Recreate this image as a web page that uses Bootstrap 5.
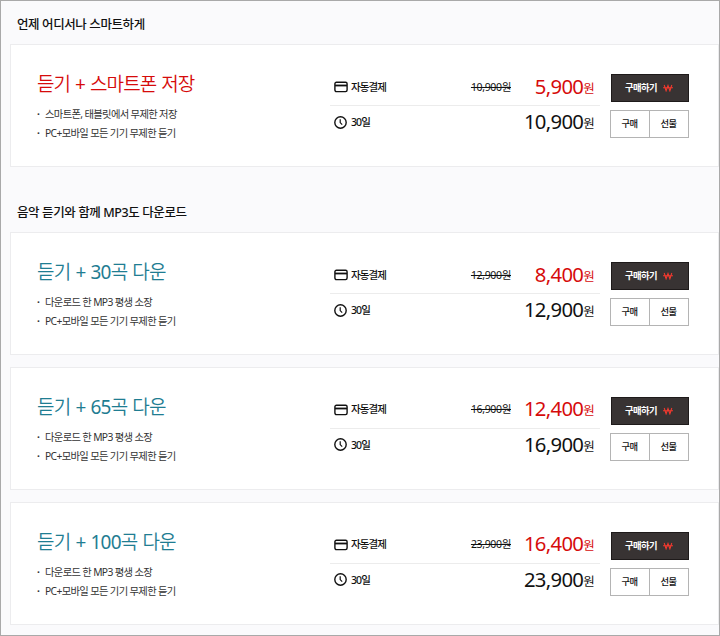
<!DOCTYPE html>
<html lang="ko">
<head>
    <meta charset="UTF-8">
    <meta name="viewport" content="width=device-width, initial-scale=1.0">
    <title>이용권 구매</title>
    <link href="https://cdn.jsdelivr.net/npm/bootstrap@5.3.0/dist/css/bootstrap.min.css" rel="stylesheet">
    <script src="https://cdn.jsdelivr.net/npm/bootstrap@5.3.0/dist/js/bootstrap.bundle.min.js"></script>
    <style>
        body {
            font-family: "Noto Sans", "Noto Sans CJK KR", sans-serif;
            background-color: #fafafc;
            color: #111;
        }
        .shop {
            width: 720px;
            height: 636px;
            border: 1px solid #a9a9a9;
            padding-left: 9px;
        }
        .shop h2 {
            height: 43px;
            line-height: 48px;
            margin: 0;
            padding-left: 7px;
            font-size: 12.5px;
            font-weight: 500;
            letter-spacing: -0.4px;
        }
        .shop h2.next {
            margin-top: 22px;
        }
        .plan {
            height: 123px;
            border: 1px solid #ececee;
            border-radius: 0;
            background-color: #fff;
        }
        .plan + .plan {
            margin-top: 11.8px;
        }
        .plan-info {
            width: 319px;
            padding: 24px 0 0 26px;
        }
        .plan-info h3 {
            margin: 0 0 6px;
            font-family: "Noto Sans", "Noto Sans CJK KR DemiLight", "Noto Sans CJK KR", sans-serif;
            font-size: 19px;
            line-height: 30px;
            font-weight: 400;
            letter-spacing: -0.8px;
            word-spacing: 0.9px;
            color: #1f7d92;
        }
        .plan-info h3.hot {
            color: #d60b0b;
            letter-spacing: -0.9px;
        }
        .plan-info li {
            font-size: 10.3px;
            line-height: 19.4px;
            letter-spacing: -0.65px;
            color: #333;
        }
        .plan-info li::before {
            content: "·";
            display: inline-block;
            width: 8px;
            font-weight: 700;
        }
        .plan-price {
            width: 270px;
            padding-top: 25px;
        }
        .price-line {
            height: 35px;
            padding: 0 6px 0 3px;
        }
        .price-line + .price-line {
            border-top: 1px solid #ececec;
        }
        .price-line svg {
            margin: 0 3px 1px 1px;
        }
        .price-name {
            font-size: 10.5px;
            letter-spacing: -0.9px;
            font-weight: 500;
        }
        .price-line del {
            font-size: 10.5px;
            letter-spacing: -0.35px;
        }
        .amount {
            width: 83px;
            margin-bottom: 4px;
            font-size: 20.3px;
            line-height: 34px;
            letter-spacing: -0.7px;
        }
        .amount span {
            font-size: 12.5px;
            line-height: 1;
            vertical-align: 1.5px;
        }
        .amount.sale {
            color: #d60b0b;
        }
        .plan-btns {
            width: 79px;
            margin-left: 10px;
            padding-top: 29px;
        }
        .plan-btns .btn {
            border-radius: 0;
            padding: 0 1px 0 0;
            height: 28px;
            font-size: 9.3px;
            line-height: 26px;
            letter-spacing: -0.6px;
            font-weight: 500;
            border: 1px solid #b4b4b4;
            color: #111;
            background-color: #fff;
        }
        .plan-btns .btn-buy {
            width: 78px;
            height: 28px;
            padding-right: 2px;
            margin-left: 1px;
            border-color: #1e1a1a;
            background-color: #383333;
            color: #fff;
            font-weight: 700;
        }
        .btn-buy svg {
            margin-left: 6px;
        }
    </style>
</head>
<body>
    <svg class="d-none">
        <symbol id="ico-card" viewBox="0 0 14 12">
            <rect x=".9" y="1.2" width="12.2" height="9.4" rx="1.5" fill="none" stroke="#111" stroke-width="1.4"/>
            <path d="M1 4.5h12" stroke="#111" stroke-width="1.8"/>
        </symbol>
        <symbol id="ico-clock" viewBox="0 0 14 14">
            <circle cx="6.5" cy="6.5" r="5.7" fill="none" stroke="#111" stroke-width="1.4"/>
            <path d="M6.2 3.3V6.6l2 2" fill="none" stroke="#111" stroke-width="1.2"/>
        </symbol>
        <symbol id="ico-won" viewBox="0 0 10 8">
            <path d="M1.2 1l1.9 5.8L5 1.5l1.9 5.3L8.8 1M0 3.8h10" fill="none" stroke="#f0392e" stroke-width="1.1"/>
        </symbol>
    </svg>

    <main class="shop overflow-hidden">
        <h2>언제 어디서나 스마트하게</h2>
        <div class="plan card flex-row">
            <div class="plan-info">
                <h3 class="hot">듣기 + 스마트폰 저장</h3>
                <ul class="list-unstyled mb-0">
                    <li>스마트폰, 태블릿에서 무제한 저장</li>
                    <li>PC+모바일 모든 기기 무제한 듣기</li>
                </ul>
            </div>
            <div class="plan-price">
                <div class="price-line d-flex align-items-center">
                    <svg width="14" height="12"><use href="#ico-card"/></svg>
                    <span class="price-name me-auto">자동결제</span>
                    <del>10,900원</del>
                    <div class="amount sale text-end">5,900<span>원</span></div>
                </div>
                <div class="price-line d-flex align-items-center">
                    <svg width="14" height="14"><use href="#ico-clock"/></svg>
                    <span class="price-name me-auto">30일</span>
                    <div class="amount text-end">10,900<span>원</span></div>
                </div>
            </div>
            <div class="plan-btns">
                <button class="btn btn-buy d-flex align-items-center justify-content-center">구매하기<svg width="10" height="8"><use href="#ico-won"/></svg></button>
                <div class="btn-group w-100 mt-2">
                    <button class="btn">구매</button>
                    <button class="btn">선물</button>
                </div>
            </div>
        </div>

        <h2 class="next">음악 듣기와 함께 MP3도 다운로드</h2>
        <div class="plan card flex-row">
            <div class="plan-info">
                <h3>듣기 + 30곡 다운</h3>
                <ul class="list-unstyled mb-0">
                    <li>다운로드 한 MP3 평생 소장</li>
                    <li>PC+모바일 모든 기기 무제한 듣기</li>
                </ul>
            </div>
            <div class="plan-price">
                <div class="price-line d-flex align-items-center">
                    <svg width="14" height="12"><use href="#ico-card"/></svg>
                    <span class="price-name me-auto">자동결제</span>
                    <del>12,900원</del>
                    <div class="amount sale text-end">8,400<span>원</span></div>
                </div>
                <div class="price-line d-flex align-items-center">
                    <svg width="14" height="14"><use href="#ico-clock"/></svg>
                    <span class="price-name me-auto">30일</span>
                    <div class="amount text-end">12,900<span>원</span></div>
                </div>
            </div>
            <div class="plan-btns">
                <button class="btn btn-buy d-flex align-items-center justify-content-center">구매하기<svg width="10" height="8"><use href="#ico-won"/></svg></button>
                <div class="btn-group w-100 mt-2">
                    <button class="btn">구매</button>
                    <button class="btn">선물</button>
                </div>
            </div>
        </div>
        <div class="plan card flex-row">
            <div class="plan-info">
                <h3>듣기 + 65곡 다운</h3>
                <ul class="list-unstyled mb-0">
                    <li>다운로드 한 MP3 평생 소장</li>
                    <li>PC+모바일 모든 기기 무제한 듣기</li>
                </ul>
            </div>
            <div class="plan-price">
                <div class="price-line d-flex align-items-center">
                    <svg width="14" height="12"><use href="#ico-card"/></svg>
                    <span class="price-name me-auto">자동결제</span>
                    <del>16,900원</del>
                    <div class="amount sale text-end">12,400<span>원</span></div>
                </div>
                <div class="price-line d-flex align-items-center">
                    <svg width="14" height="14"><use href="#ico-clock"/></svg>
                    <span class="price-name me-auto">30일</span>
                    <div class="amount text-end">16,900<span>원</span></div>
                </div>
            </div>
            <div class="plan-btns">
                <button class="btn btn-buy d-flex align-items-center justify-content-center">구매하기<svg width="10" height="8"><use href="#ico-won"/></svg></button>
                <div class="btn-group w-100 mt-2">
                    <button class="btn">구매</button>
                    <button class="btn">선물</button>
                </div>
            </div>
        </div>
        <div class="plan card flex-row">
            <div class="plan-info">
                <h3>듣기 + 100곡 다운</h3>
                <ul class="list-unstyled mb-0">
                    <li>다운로드 한 MP3 평생 소장</li>
                    <li>PC+모바일 모든 기기 무제한 듣기</li>
                </ul>
            </div>
            <div class="plan-price">
                <div class="price-line d-flex align-items-center">
                    <svg width="14" height="12"><use href="#ico-card"/></svg>
                    <span class="price-name me-auto">자동결제</span>
                    <del>23,900원</del>
                    <div class="amount sale text-end">16,400<span>원</span></div>
                </div>
                <div class="price-line d-flex align-items-center">
                    <svg width="14" height="14"><use href="#ico-clock"/></svg>
                    <span class="price-name me-auto">30일</span>
                    <div class="amount text-end">23,900<span>원</span></div>
                </div>
            </div>
            <div class="plan-btns">
                <button class="btn btn-buy d-flex align-items-center justify-content-center">구매하기<svg width="10" height="8"><use href="#ico-won"/></svg></button>
                <div class="btn-group w-100 mt-2">
                    <button class="btn">구매</button>
                    <button class="btn">선물</button>
                </div>
            </div>
        </div>
    </main>
</body>
</html>
